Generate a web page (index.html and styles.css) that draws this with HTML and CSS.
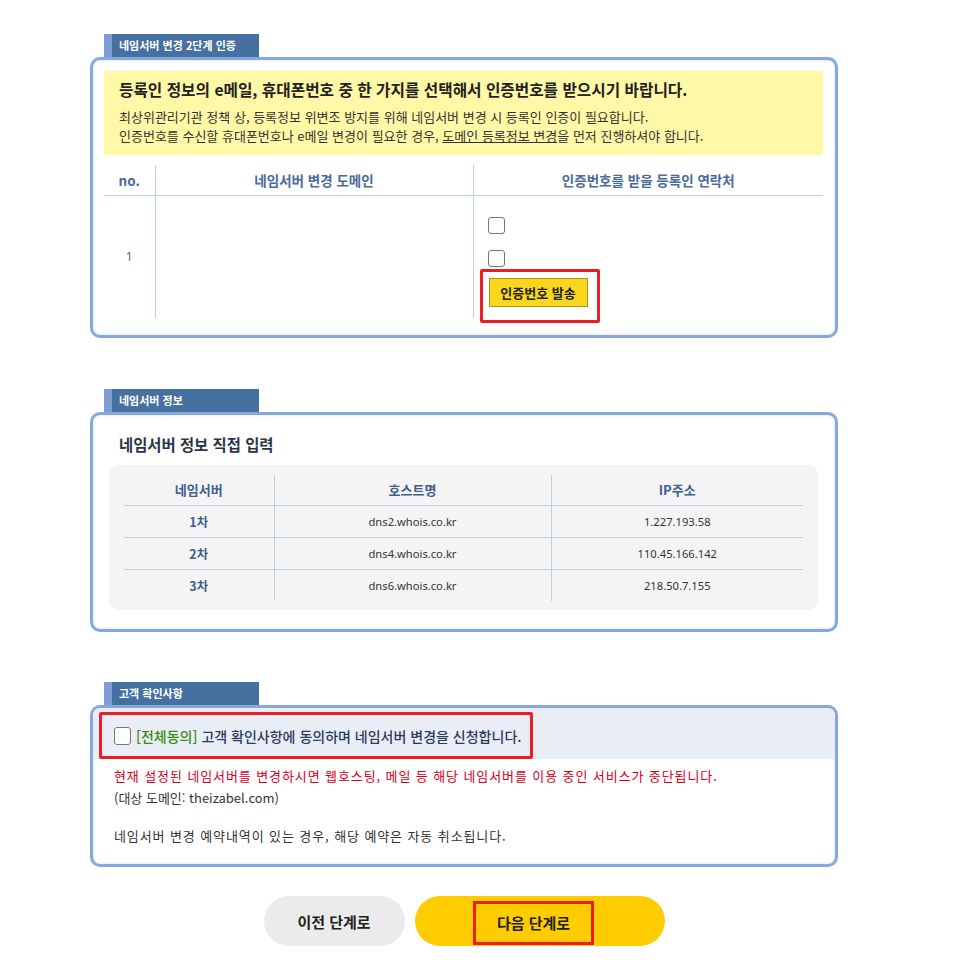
FILE: index.html
```html
<!DOCTYPE html>
<html lang="ko">
<head>
<meta charset="utf-8">
<title>네임서버 변경</title>
<link rel="stylesheet" href="styles.css">
</head>
<body>
<div class="wrap">

  <section class="section">
    <div class="tab"><span>네임서버 변경 2단계 인증</span></div>
    <div class="box box-auth">
      <div class="notice">
        <p class="notice-title">등록인 정보의 e메일, 휴대폰번호 중 한 가지를 선택해서 인증번호를 받으시기 바랍니다.</p>
        <p class="notice-text">최상위관리기관 정책 상, 등록정보 위변조 방지를 위해 네임서버 변경 시 등록인 인증이 필요합니다.<br>인증번호를 수신할 휴대폰번호나 e메일 변경이 필요한 경우, <u>도메인 등록정보 변경</u>을 먼저 진행하셔야 합니다.</p>
      </div>
      <table class="auth-table">
        <thead>
          <tr><th class="c-no">no.</th><th class="c-domain">네임서버 변경 도메인</th><th class="c-contact">인증번호를 받을 등록인 연락처</th></tr>
        </thead>
        <tbody>
          <tr>
            <td class="c-no num">1</td>
            <td class="c-domain"></td>
            <td class="c-contact">
              <div class="contact">
                <span class="chk"></span>
                <span class="chk"></span>
                <span class="send-wrap"><button class="send-btn">인증번호 발송</button></span>
              </div>
            </td>
          </tr>
        </tbody>
      </table>
    </div>
  </section>

  <section class="section">
    <div class="tab"><span>네임서버 정보</span></div>
    <div class="box box-ns">
      <h3 class="ns-title">네임서버 정보 직접 입력</h3>
      <div class="ns-panel">
        <table class="ns-table">
          <thead>
            <tr><th class="n1">네임서버</th><th class="n2">호스트명</th><th class="n3">IP주소</th></tr>
          </thead>
          <tbody>
            <tr><td class="ord">1차</td><td>dns2.whois.co.kr</td><td>1.227.193.58</td></tr>
            <tr><td class="ord">2차</td><td>dns4.whois.co.kr</td><td>110.45.166.142</td></tr>
            <tr><td class="ord">3차</td><td>dns6.whois.co.kr</td><td>218.50.7.155</td></tr>
          </tbody>
        </table>
      </div>
    </div>
  </section>

  <section class="section">
    <div class="tab"><span>고객 확인사항</span></div>
    <div class="box box-agree">
      <div class="agree-band">
        <label class="agree"><span class="chk chk-agree"></span><span class="agree-text"><em>[전체동의]</em> 고객 확인사항에 동의하며 네임서버 변경을 신청합니다.</span></label>
      </div>
      <div class="agree-body">
        <p class="warn spaced">현재 설정된 네임서버를 변경하시면 웹호스팅, 메일 등 해당 네임서버를 이용 중인 서비스가 중단됩니다.</p>
        <p>(대상 도메인: theizabel.com)</p>
        <p class="gap spaced">네임서버 변경 예약내역이 있는 경우, 해당 예약은 자동 취소됩니다.</p>
      </div>
    </div>
  </section>

  <div class="actions">
    <button class="btn btn-prev">이전 단계로</button>
    <button class="btn btn-next"><span class="next-mark">다음 단계로</span></button>
  </div>

</div>
</body>
</html>
```

FILE: styles.css
```css
* { box-sizing: border-box; }
html, body { margin: 0; padding: 0; background: #fff; }
body {
  font-family: "Noto Sans", "Noto Sans CJK KR", sans-serif;
  color: #333;
}
p { margin: 0; }
.wrap {
  width: 748px;
  margin-left: 90px;
  padding-top: 34px;
}
.section { margin-bottom: 51px; }
.section:nth-of-type(2) { margin-bottom: 50px; }

.tab {
  margin-left: 14px;
  width: 155px;
  height: 23px;
  background: #46709f;
  border-left: 8px solid #7d9fd4;
  color: #fff;
  font-family: "Noto Sans CJK KR", sans-serif;
  font-size: 11px;
  font-weight: 700;
  line-height: 22px;
  padding-left: 7px;
}
.box {
  border: 3px solid #87a7df;
  border-radius: 10px;
  background: #fff;
  box-shadow: inset 0 0 3px rgba(120, 150, 200, 0.35);
}

/* section 1 */
.box-auth { padding: 11px 12px 16px 11px; height: 281px; }
.notice {
  background: #fff8a6;
  padding: 9px 15px 0;
  height: 84px;
  font-family: "Noto Sans CJK KR", sans-serif;
}
.notice-title {
  font-size: 15.7px;
  font-weight: 700;
  color: #222;
  line-height: 20px;
  margin-bottom: 7px;
}
.notice-text {
  font-size: 13px;
  line-height: 19px;
  color: #333;
}
.auth-table {
  width: 100%;
  border-collapse: collapse;
  margin-top: 10px;
  font-family: "Noto Sans CJK KR", sans-serif;
}
.auth-table th {
  height: 30px;
  font-size: 13.5px;
  font-weight: 700;
  color: #4a6a9c;
  border-bottom: 1px solid #bccfe9;
  padding: 0;
}
.auth-table th + th, .auth-table td + td { border-left: 1px solid #bccfe9; }
.c-no { width: 51px; }
.c-domain { width: 318px; }
.auth-table td { height: 123px; padding: 0; vertical-align: top; }
.auth-table td.num {
  vertical-align: middle;
  text-align: center;
  font-family: "Noto Sans", sans-serif;
  font-size: 12px;
  color: #3c6aa8;
}
.contact {
  display: flex;
  flex-direction: column;
  align-items: flex-start;
  padding: 21px 0 0 14px;
}
.chk {
  display: block;
  width: 17px;
  height: 17px;
  border: 1px solid #767676;
  border-radius: 3px;
  background: #fff;
}
.contact .chk + .chk { margin-top: 16px; }
.send-wrap {
  position: relative;
  margin-top: 11px;
  margin-left: 1px;
}
.send-wrap::after {
  content: "";
  position: absolute;
  left: -9px; top: -9px; right: -12px; bottom: -16px;
  border: 3px solid #ee1d24;
  border-radius: 2px;
}
.send-btn {
  display: block;
  width: 99px;
  height: 29px;
  background: #f9d71e;
  border: 1px solid #b3950a;
  font-family: "Noto Sans CJK KR", sans-serif;
  font-size: 13px;
  font-weight: 700;
  color: #222;
  padding: 0;
}

/* section 2 */
.box-ns { padding: 18px 17px 17px 16px; height: 220px; }
.ns-title {
  margin: 0 0 10px 10px;
  font-family: "Noto Sans CJK KR", sans-serif;
  font-size: 15.4px;
  font-weight: 700;
  color: #2b3447;
  line-height: 22px;
}
.ns-panel {
  background: #f4f4f4;
  border-radius: 10px;
  padding: 10px 15px 9px;
}
.ns-table {
  width: 100%;
  border-collapse: collapse;
  font-size: 11.2px;
  text-align: center;
}
.ns-table th {
  height: 30px;
  font-family: "Noto Sans CJK KR", sans-serif;
  font-size: 13px;
  font-weight: 700;
  color: #3f5f90;
  padding: 0;
  border-bottom: 1px solid #bccfe9;
}
.ns-table td {
  height: 32px;
  padding: 0;
  color: #333;
  border-bottom: 1px solid #bccfe9;
}
.ns-table tr:last-child td { border-bottom: 0; }
.ns-table th + th, .ns-table td + td { border-left: 1px solid #bccfe9; }
.n1 { width: 150px; }
.n2 { width: 277px; }
.ns-table td.ord {
  font-family: "Noto Sans CJK KR", sans-serif;
  font-size: 12.5px;
  font-weight: 700;
  color: #3f5f90;
}

/* section 3 */
.box-agree { height: 162px; overflow: hidden; }
.agree-band {
  background: #e9edf6;
  height: 51px;
  padding: 4px 0 0 6px;
}
.agree {
  position: relative;
  display: flex;
  align-items: center;
  gap: 5px;
  width: 434px;
  height: 47px;
  padding-left: 15px;
}
.agree::after {
  content: "";
  position: absolute;
  inset: 0;
  border: 3px solid #ee1d24;
  border-radius: 2px;
}
.chk-agree { width: 17px; height: 18px; border-radius: 3px; }
.agree-text {
  font-family: "Noto Sans CJK KR", sans-serif;
  font-size: 14px;
  font-weight: 500;
  color: #2c3b57;
}
.agree-text em { font-style: normal; color: #3d8a15; }
.agree-body {
  padding: 6px 0 0 21px;
  font-family: "Noto Sans CJK KR", sans-serif;
  font-size: 13px;
  line-height: 22px;
  color: #333;
}
.agree-body .spaced { letter-spacing: 0.9px; }
.agree-body .warn { color: #d8001b; }
.agree-body .gap { margin-top: 16px; }

/* actions */
.actions {
  display: flex;
  justify-content: center;
  gap: 10px;
  margin-top: -22px;
}
.btn {
  height: 50px;
  border: 0;
  border-radius: 25px;
  font-family: "Noto Sans CJK KR", sans-serif;
  font-size: 15px;
  font-weight: 700;
  color: #222;
  padding: 0;
}
.btn-prev { width: 141px; background: #ebebeb; }
.btn-next { width: 250px; background: #ffcc00; }
.next-mark {
  position: relative;
  display: inline-block;
  width: 121px;
  height: 44px;
  line-height: 44px;
  margin-left: -12px;
  margin-top: 3px;
}
.next-mark::after {
  content: "";
  position: absolute;
  inset: 0;
  border: 3px solid #ee1d24;
}
```
